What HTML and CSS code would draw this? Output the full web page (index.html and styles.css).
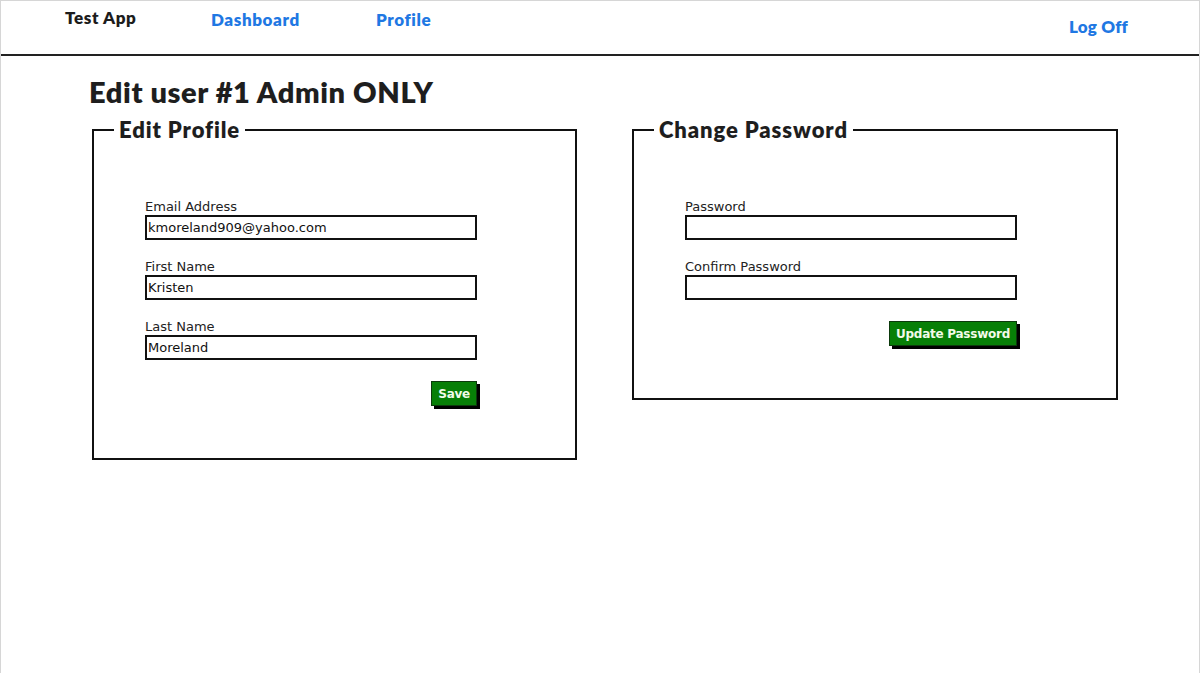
FILE: index.html
```html
<!DOCTYPE html>
<html lang="en">
<head>
<meta charset="utf-8">
<title>Test App</title>
<link rel="stylesheet" href="styles.css">
</head>
<body>
<div class="frame">
  <header class="topbar">
    <nav class="nav">
      <a class="brand" href="#">Test App</a>
      <a class="nav-link dash" href="#">Dashboard</a>
      <a class="nav-link prof" href="#">Profile</a>
      <a class="nav-link logoff" href="#">Log Off</a>
    </nav>
  </header>
  <main class="content">
    <h1 class="title">Edit user #1 Admin ONLY</h1>
    <div class="columns">
      <fieldset class="panel panel-profile">
        <legend class="panel-title">Edit Profile</legend>
        <form class="form">
          <label class="field">
            <span class="field-label">Email Address</span>
            <input class="field-input" type="text" value="kmoreland909@yahoo.com">
          </label>
          <label class="field">
            <span class="field-label">First Name</span>
            <input class="field-input" type="text" value="Kristen">
          </label>
          <label class="field">
            <span class="field-label">Last Name</span>
            <input class="field-input" type="text" value="Moreland">
          </label>
          <div class="actions">
            <button class="btn" type="button">Save</button>
          </div>
        </form>
      </fieldset>
      <fieldset class="panel panel-password">
        <legend class="panel-title">Change Password</legend>
        <form class="form">
          <label class="field">
            <span class="field-label">Password</span>
            <input class="field-input" type="password" value="">
          </label>
          <label class="field">
            <span class="field-label">Confirm Password</span>
            <input class="field-input" type="password" value="">
          </label>
          <div class="actions">
            <button class="btn" type="button">Update Password</button>
          </div>
        </form>
      </fieldset>
    </div>
  </main>
</div>
</body>
</html>
```

FILE: styles.css
```css
* { box-sizing: border-box; }

html, body {
  margin: 0;
  padding: 0;
  background: #ffffff;
}

.frame {
  min-height: 673px;
  border: 1px solid #d6d6d6;
  border-bottom: none;
  font-family: "DejaVu Sans", Verdana, sans-serif;
}

.topbar {
  height: 55px;
  border-bottom: 2px solid #222222;
}

.nav {
  display: flex;
  align-items: flex-start;
  padding-left: 64px;
  padding-right: 71px;
  font-family: "Lato", "Open Sans", sans-serif;
  font-weight: 800;
  font-size: 17px;
  letter-spacing: 0.6px;
}

.nav a {
  text-decoration: none;
  line-height: 20px;
}

.brand {
  color: #1c1c1c;
  padding-top: 7px;
  width: 146px;
}

.nav-link {
  color: #1f78e3;
}

.dash {
  padding-top: 9px;
  width: 165px;
}

.prof {
  padding-top: 9px;
}

.logoff {
  margin-left: auto;
  padding-top: 16px;
  letter-spacing: 0.2px;
}

.content {
  padding: 19px 0 0 88px;
}

.title {
  margin: 0 0 9px 0;
  font-family: "Lato", "Open Sans", sans-serif;
  font-weight: 800;
  font-size: 29px;
  line-height: 34px;
  color: #1e1e1e;
  letter-spacing: 0.6px;
}

.columns {
  display: flex;
  align-items: flex-start;
  gap: 55px;
  padding-left: 3px;
}

.panel {
  margin: 0;
  padding: 0;
  border: 2px solid #111111;
  min-width: 0;
}

.panel-profile {
  width: 485px;
  height: 342px;
}

.panel-password {
  width: 486px;
  height: 282px;
}

.panel-title {
  margin-left: 20px;
  padding: 0 5px;
  font-family: "Lato", "Open Sans", sans-serif;
  font-weight: 800;
  font-size: 22px;
  line-height: 24px;
  color: #1e1e1e;
  letter-spacing: 0.9px;
}

.form {
  width: 335px;
  margin: 56px 0 0 51px;
}

.field {
  display: flex;
  flex-direction: column;
  margin-bottom: 18px;
}

.field-label {
  font-size: 13px;
  line-height: 17px;
  color: #222222;
}

.field-input {
  width: 332px;
  height: 25px;
  margin: 0;
  padding: 0 1px;
  border: 2px solid #111111;
  border-radius: 0;
  font-family: "DejaVu Sans", Verdana, sans-serif;
  font-size: 13px;
  color: #111111;
  background: #ffffff;
  outline: none;
}

.actions {
  display: flex;
  justify-content: flex-end;
  padding-right: 3px;
  margin-top: 21px;
}

.btn {
  height: 25px;
  padding: 0 6px;
  border: 1px solid #0c3a0c;
  border-radius: 0;
  background: #077f07;
  color: #f2fbe9;
  font-family: "DejaVu Sans", Verdana, sans-serif;
  font-size: 12px;
  font-weight: bold;
  letter-spacing: -0.25px;
  box-shadow: 3px 3px 0 #000000;
  cursor: pointer;
}
```
